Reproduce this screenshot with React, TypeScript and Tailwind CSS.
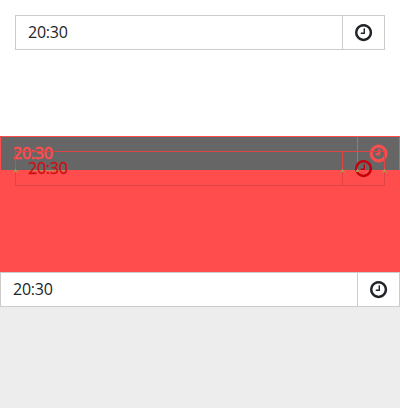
function Clock({ bold = false }: { bold?: boolean }) {
  return (
    <svg
      viewBox="0 0 1536 1536"
      fill="currentColor"
      stroke={bold ? "currentColor" : "none"}
      strokeWidth={bold ? 60 : 0}
      className="block size-[17.14px] overflow-visible"
    >
      <path d="M896 416v448q0 14-9 23t-23 9H544q-14 0-23-9t-9-23v-64q0-14 9-23t23-9h224V416q0-14 9-23t23-9h64q14 0 23 9t9 23zm416 352q0-148-73-273t-198-198-273-73-273 73-198 198-73 273 73 273 198 198 273 73 273-73 198-198 73-273zm224 0q0 209-103 385.500T1153.500 1433 768 1536t-385.500-103T103 1153.500 0 768t103-385.500T382.500 103 768 0t385.500 103T1433 382.500 1536 768z" />
    </svg>
  );
}

type FieldProps = { box: string; text?: string; icon?: string; bold?: boolean };

function TimeField({ box, text = "", icon = "", bold = false }: FieldProps) {
  return (
    <div className={`flex h-[35px] border ${box}`}>
      <div className={`flex flex-1 items-center pl-3 text-[16px] leading-[33px] tracking-[-0.25px] ${text}`}>
        <span>20:30</span>
      </div>
      <div className={`flex w-[42px] items-center justify-center border-l border-inherit pt-px ${icon}`}>
        <Clock bold={bold} />
      </div>
    </div>
  );
}

function Mark() {
  return (
    <svg viewBox="0 0 5 4" className="block h-1 w-[5px]" fill="#b89048" shapeRendering="crispEdges">
      <path d="M2 0h1v1h1v2h1v1h-1v-1h-3v1h-1v-1h1v-2h1z" />
    </svg>
  );
}

export default function App() {
  return (
    <div className="h-[408px] w-[400px] overflow-hidden bg-white font-['Open_Sans','Noto_Sans',sans-serif] text-[#212529]">
      <section className="h-[136px] p-[15px]">
        <TimeField box="border-[#cccccc] bg-white" />
      </section>

      <section className="relative h-[136px] bg-[#ff4d4d]">
        <div className="h-[34px] overflow-hidden">
          <TimeField
            box="border-[#ff4d4d] bg-[#666666]"
            text="[-webkit-text-stroke:0.7px_#ff4d4d] text-[#ff4d4d]"
            icon="text-[#ff4d4d]"
            bold
          />
        </div>
        <i className="absolute top-[34px] left-[29px] h-px w-[38px] bg-[#c2854a]" />
        <div className="absolute inset-x-[15px] top-[15px]">
          <TimeField
            box="border-[#e04343]"
            text="[-webkit-text-stroke:0.3px_#cc0f14] text-[#cc0f14]"
            icon="text-[#c4000b]"
          />
        </div>
        {/* Alignment marks where the two fields cross */}
        <div className="absolute inset-x-[13px] top-[33px] flex">
          <Mark />
          <span className="flex-1" />
          <Mark />
          <span className="w-[10px]" />
          <Mark />
          <span className="w-[22px]" />
          <Mark />
        </div>
      </section>

      <section className="h-[136px] bg-[#ededed]">
        <TimeField box="border-[#cccccc] bg-white" />
      </section>
    </div>
  );
}
